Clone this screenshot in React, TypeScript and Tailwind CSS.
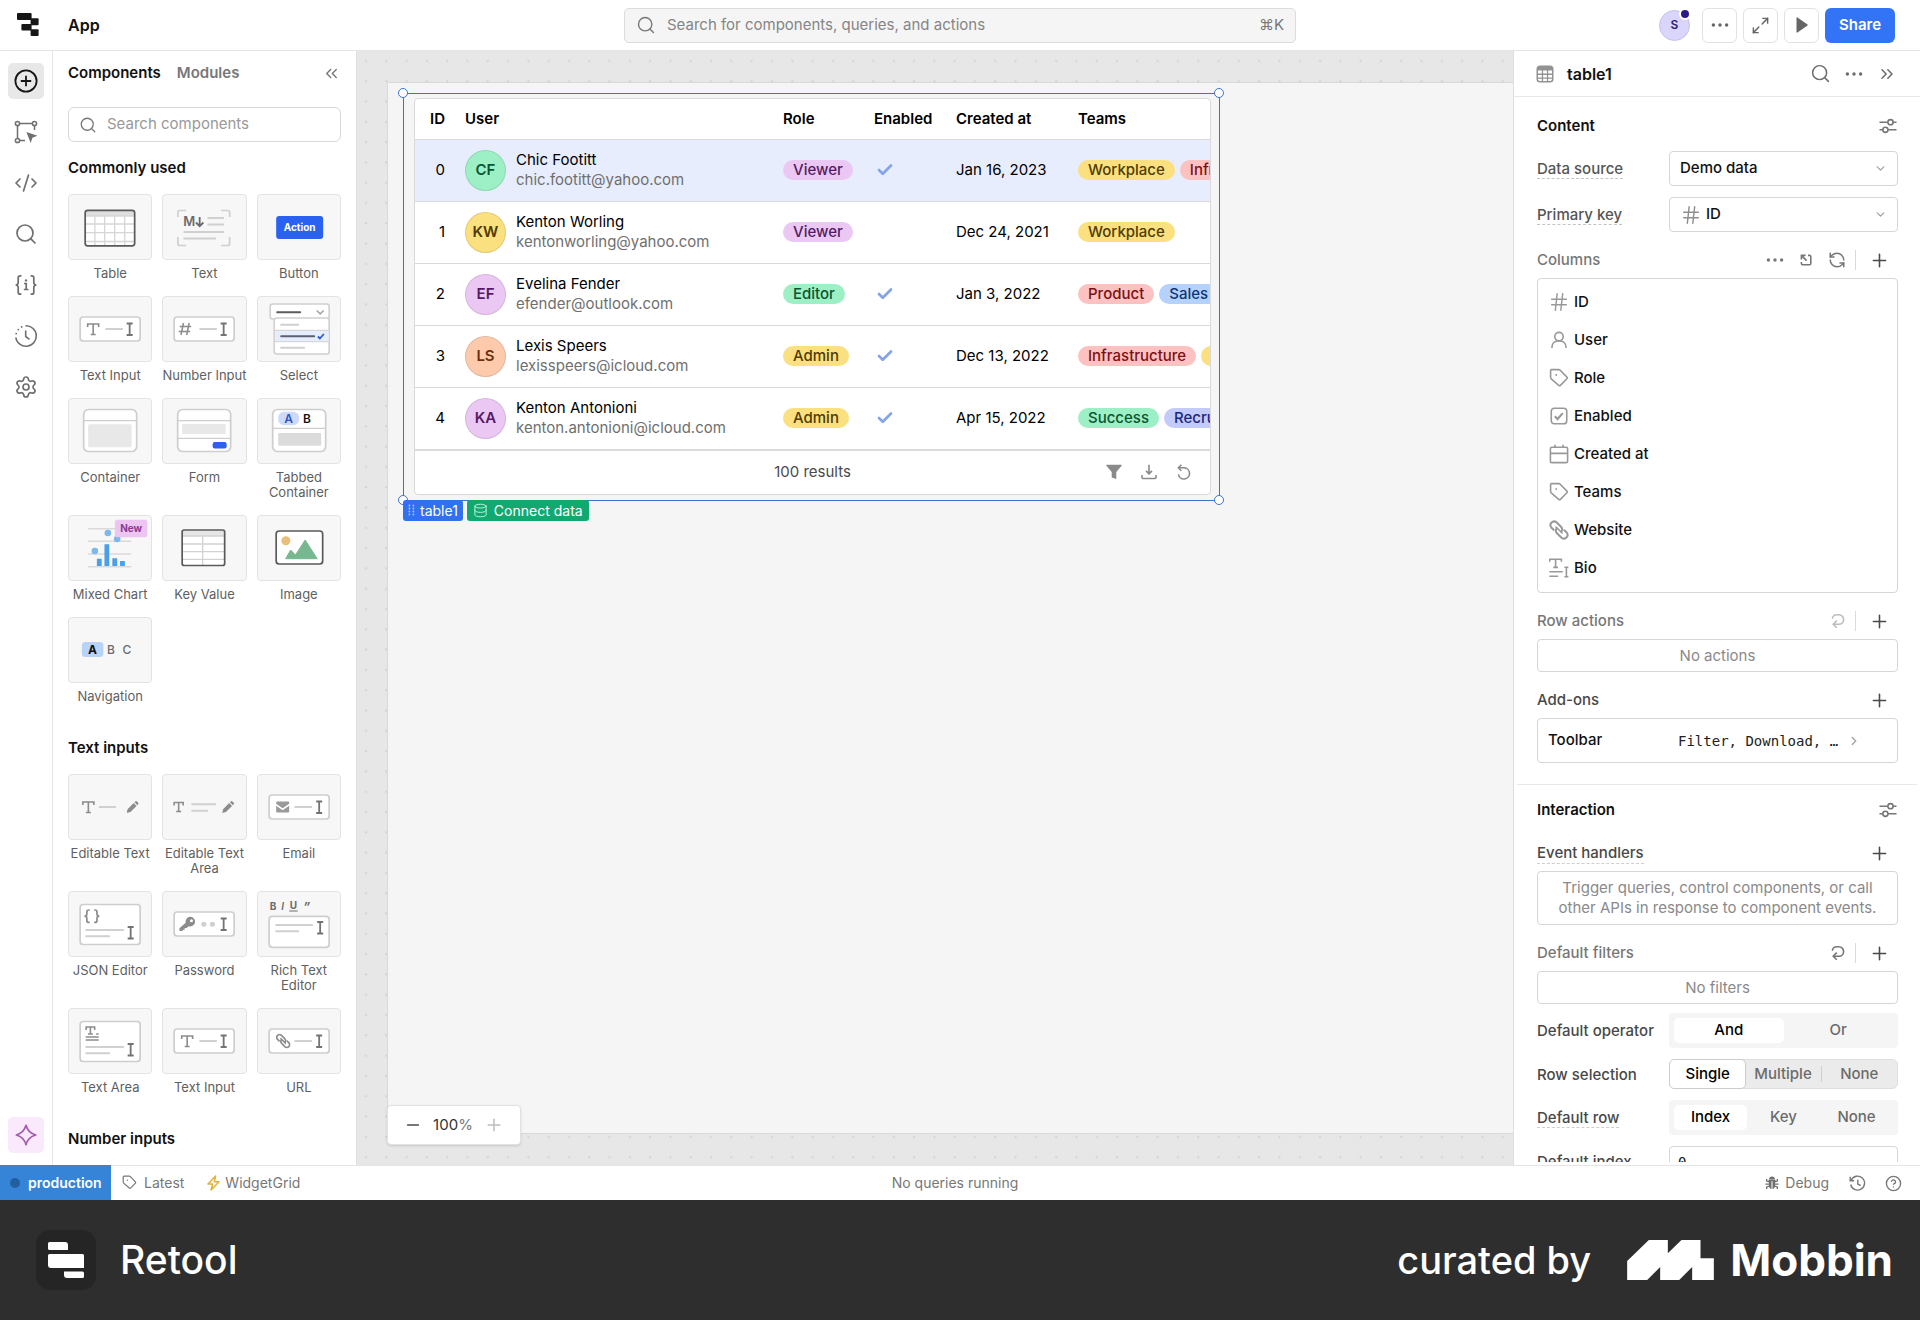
import React, { useState } from 'react';
import {
  Search,
  CodeXml,
  Settings,
  ChevronsLeft,
  ChevronsRight,
  ChevronDown,
  ChevronRight,
  Maximize2,
  RefreshCcw,
  Plus,
  Minus,
  Hash,
  Check,
  CircleQuestionMark,
  Database,
} from 'lucide-react';

type DrawingProps = { className?: string };

/* ---------- Icons ---------- */

const Dots: React.FC<DrawingProps> = ({ className = '' }) => (
  <svg viewBox="0 0 18 18" className={`w-[18px] h-[18px] ${className}`} fill="currentColor">
    <circle cx="2.4" cy="9" r="1.7" />
    <circle cx="9" cy="9" r="1.7" />
    <circle cx="15.6" cy="9" r="1.7" />
  </svg>
);

const Sliders: React.FC<DrawingProps> = ({ className = '' }) => (
  <svg viewBox="0 0 18 18" className={`w-[18px] h-[18px] ${className}`} fill="none" stroke="currentColor" strokeWidth="1.6">
    <path d="M.5 5.2h8.2M14.2 5.2h3.3M.5 12.8h3.2M9.2 12.8h8.3" />
    <circle cx="11.5" cy="5.2" r="2.6" />
    <circle cx="6.4" cy="12.8" r="2.6" />
  </svg>
);

const ReturnArrow: React.FC<DrawingProps> = ({ className = '' }) => (
  <svg viewBox="0 0 16 16" className={`w-4 h-4 ${className}`} fill="none" stroke="currentColor" strokeWidth="1.6">
    <path d="M2.4 5.8C2.6 3.2 4.6 1.8 7 1.8h1.9a4.7 4.7 0 0 1 0 9.4H3.6" />
    <path d="M6.8 7.6 3.2 11.2l3.6 3.6" />
  </svg>
);

const CollapseBox: React.FC<DrawingProps> = ({ className = '' }) => (
  <svg viewBox="0 0 12 12" className={`w-3 h-3 ${className}`} fill="none" stroke="currentColor" strokeWidth="1.6">
    <path d="M8 1.4h1.6a1.2 1.2 0 0 1 1.2 1.2v7a1.2 1.2 0 0 1-1.2 1.2h-7a1.2 1.2 0 0 1-1.2-1.2V8" />
    <path d="M1.4 5.6V1.4h4.2M1.6 1.6l5 5" />
  </svg>
);

const TagIcon: React.FC<DrawingProps> = ({ className = '' }) => (
  <svg viewBox="0 0 20 20" className={className} fill="none" stroke="currentColor" strokeWidth="1.6" strokeLinejoin="round">
    <path d="M1.6 2.6a1 1 0 0 1 1-1h7.2a2 2 0 0 1 1.4.6l6.7 6.9a1.2 1.2 0 0 1 0 1.7l-6.5 6.6a1.2 1.2 0 0 1-1.7 0L2.2 10.8a2 2 0 0 1-.6-1.4z" />
    <circle cx="7.2" cy="7" r=".9" fill="currentColor" stroke="none" />
  </svg>
);

const PersonIcon: React.FC<DrawingProps> = ({ className = '' }) => (
  <svg viewBox="0 0 20 20" className={className} fill="none" stroke="currentColor" strokeWidth="1.8">
    <circle cx="10" cy="6.2" r="4.7" />
    <path d="M2.2 18.8v-1c0-3.8 3-6.8 7.8-6.8s7.8 3 7.8 6.8v1" />
  </svg>
);

const CheckBoxIcon: React.FC<DrawingProps> = ({ className = '' }) => (
  <svg viewBox="0 0 20 20" className={className} fill="none" stroke="currentColor" strokeWidth="1.8">
    <rect x="1.4" y="1.4" width="17.2" height="17.2" rx="3.4" />
    <path d="m5.4 10.4 3 3 5.8-6.6" strokeWidth="2.4" />
  </svg>
);

const CalendarIcon: React.FC<DrawingProps> = ({ className = '' }) => (
  <svg viewBox="0 0 20 20" className={className} fill="none" stroke="currentColor" strokeWidth="1.6">
    <rect x="1.4" y="3.2" width="17.2" height="15.4" rx="1.4" />
    <path d="M1.4 9.4h17.2M6 .8v2.6M14 .8v2.6" />
  </svg>
);

const LinkIcon: React.FC<DrawingProps> = ({ className = '' }) => (
  <svg viewBox="0 0 20 20" className={className} fill="none" stroke="currentColor" strokeWidth="2" strokeLinecap="round">
    <path d="M4.6 9.8 2.3 7.5a3.7 3.7 0 0 1 5.2-5.2l4.5 4.5a3.7 3.7 0 0 1 .5 4.6" />
    <path d="M15.4 10.2l2.3 2.3a3.7 3.7 0 0 1-5.2 5.2L8 13.2a3.7 3.7 0 0 1-.5-4.6" />
    <path d="m7 7 6 6" strokeWidth="1.6" />
  </svg>
);

const LongTextIcon: React.FC<DrawingProps> = ({ className = '' }) => (
  <svg viewBox="0 0 20 20" className={className} fill="none" stroke="currentColor" strokeWidth="1.6">
    <path d="M.8 3.8V1.2h11.6v2.6M6.6 1.2v8.2M4.2 9.4H9M.4 13.8h13.4M.4 18.2h8.8" />
    <path d="M15.4 9.2h4M15.4 18.8h4M17.4 9.2v9.6" />
  </svg>
);

const TableIcon: React.FC<DrawingProps> = ({ className = '' }) => (
  <svg viewBox="0 0 18 18" className={`w-[18px] h-[18px] ${className}`}>
    <rect x=".5" y=".5" width="17" height="17" rx="3.5" fill="#929292" />
    <g fill="#fff">
      <path d="M2 5.4h3.8v3.2H2zM7.1 5.4h3.8v3.2H7.1zM12.2 5.4H16v3.2h-3.8zM2 9.9h3.8v2.5H2zM7.1 9.9h3.8v2.5H7.1zM12.2 9.9H16v2.5h-3.8zM7.1 13.7h3.8V16H7.1z" />
      <path d="M2 13.7h3.8V16H4a2 2 0 0 1-2-2zM12.2 13.7H16v.3a2 2 0 0 1-2 2h-1.8z" />
    </g>
  </svg>
);

const AddIcon = () => (
  <svg viewBox="0 0 24 24" className="w-6 h-6" fill="none" stroke="currentColor" strokeWidth="1.8">
    <circle cx="12" cy="12" r="10.6" />
    <path d="M12 6.8v10.4M6.8 12h10.4" />
  </svg>
);

const FrameSelectIcon = () => (
  <svg viewBox="0 0 24 24" className="w-6 h-6" fill="none" stroke="currentColor" strokeWidth="1.5">
    <circle cx="3.5" cy="3.5" r="2.1" />
    <circle cx="20.5" cy="3.5" r="2.1" />
    <circle cx="3.5" cy="20.5" r="2.1" />
    <path d="M5.6 3.5h12.8M3.5 5.6v12.8M20.5 5.6V10M5.6 20.5H11" />
    <path d="m12.4 12 11 3.7-5 2-1.7 5.2z" fill="currentColor" stroke="none" />
  </svg>
);

const StateIcon = () => (
  <svg viewBox="0 0 24 24" className="w-6 h-6" fill="none" stroke="currentColor" strokeWidth="1.7">
    <path d="M7.4 2.8H6.2a2 2 0 0 0-2 2v4.4c0 1.6-1 2.8-2.6 2.8 1.600 0 2.600 1.200 2.600 2.800v4.400a2 2 0 0 0 2 2h1.200" />
    <path d="M16.600 2.800h1.200a2 2 0 0 1 2 2v4.400c0 1.600 1 2.800 2.600 2.800-1.600 0-2.600 1.200-2.600 2.800v4.400a2 2 0 0 1-2 2h-1.200" />
    <path d="M10 10.5h2.200v6M9.800 16.500h4.600" />
    <circle cx="12" cy="7.4" r="1.2" fill="currentColor" stroke="none" />
  </svg>
);

const HistoryIcon = () => (
  <svg viewBox="0 0 24 24" className="w-6 h-6" fill="none" stroke="currentColor" strokeWidth="1.6">
    <path d="M11.5 1.7A10.3 10.3 0 1 1 1.8 13.5" />
    <path d="M11.7 6.5v6l3.8 2.8" />
    <g fill="currentColor" stroke="none">
      <circle cx="2.2" cy="9.6" r=".9" />
      <circle cx="4.3" cy="5.6" r=".9" />
      <circle cx="7.7" cy="2.9" r=".9" />
    </g>
  </svg>
);

const SparkIcon = () => (
  <svg viewBox="0 0 22 22" className="w-[22px] h-[22px]" fill="none" stroke="#a35cab" strokeWidth="1.7" strokeLinejoin="round">
    <path d="M11 1.300c1.400 5.400 4.200 8.200 9.700 9.700-5.500 1.500-8.300 4.300-9.700 9.700-1.400-5.400-4.200-8.200-9.700-9.700C6.800 9.500 9.600 6.700 11 1.300z" />
  </svg>
);

const BugIcon = () => (
  <svg viewBox="0 0 14 14" className="w-[14px] h-[14px]" fill="none" stroke="#6f6f6f" strokeWidth="1.3">
    <path d="M4 3.6C4 1.7 5.3.6 7 .6s3 1.1 3 3z" fill="#6f6f6f" stroke="none" />
    <path d="M4 5h2.5v8C5 12.8 4 11.5 4 10zM10 5H7.500v8c1.500-.2 2.500-1.500 2.500-3z" fill="#6f6f6f" stroke="none" />
    <path d="M4 5.8 1.6 4.9V3M4 8.2H.4M4 10.2l-2.400 1V13M10 5.800l2.400-.9V3M10 8.200h3.600M10 10.200l2.400 1V13M3.500 4.500h7" />
  </svg>
);

const RecentIcon = () => (
  <svg viewBox="0 0 17 17" className="w-[17px] h-[17px]" fill="none" stroke="#777" strokeWidth="1.4">
    <path d="M2.2 5.2A7 7 0 1 1 1.7 9.5" />
    <path d="M1.2 1.8v3.9h3.9M8.8 4.8v4.300l2.800 1.400" />
  </svg>
);

const BoltIcon = () => (
  <svg viewBox="0 0 13 16" className="w-[13px] h-4" fill="none" stroke="#e3b33c" strokeWidth="1.6" strokeLinejoin="round">
    <path d="M8.600 1 1 9h4.600l-1.400 6L12 6.800H7.300z" />
  </svg>
);

const RetoolMark = () => (
  <svg viewBox="0 0 22 24" className="w-[22px] h-6" fill="#161616">
    <rect x="0" y="0" width="14.6" height="7" rx="1" />
    <rect x="13.6" y="5.2" width="8" height="7" rx="1" />
    <rect x="4.4" y="11" width="10.2" height="6.6" rx="1" />
    <rect x="13.6" y="16.2" width="8" height="6.8" rx="1" />
  </svg>
);

const GripIcon = () => (
  <svg viewBox="0 0 7 12" className="w-[7px] h-3" fill="#a9c4fb">
    {[1.5, 4.5, 7.5, 10.5].map((y) => (
      <g key={y}>
        <circle cx="1.400" cy={y} r=".9" />
        <circle cx="5.400" cy={y} r=".9" />
      </g>
    ))}
  </svg>
);

const FunnelIcon = () => (
  <svg viewBox="0 0 16 16" className="w-4 h-4" fill="#8a8a8a">
    <path d="M.8.8h14.400c.5 0 .7.500.4.900L10.300 8v7l-4.600-1.500V8L.4 1.700C.1 1.300.300.8.800.8z" />
  </svg>
);

const DownloadIcon = () => (
  <svg viewBox="0 0 16 16" className="w-4 h-4" fill="none" stroke="#8a8a8a" strokeWidth="1.600">
    <path d="M1 11v2.500a1 1 0 0 0 1 1h12a1 1 0 0 0 1-1V11" />
    <path d="M8 .8v9M5 6.900l3 3 3-3" />
  </svg>
);

const ResetIcon = () => (
  <svg viewBox="0 0 16 16" className="w-4 h-4" fill="none" stroke="#8a8a8a" strokeWidth="1.600">
    <path d="M2.800 3.800h5.400a5.600 5.600 0 1 1-5.800 6.600" />
    <path d="M5.400.8 2.400 3.800l3 3" />
  </svg>
);

/* ---------- Parts used in the component thumbnails ---------- */

const SerifT: React.FC<{ x: number; y: number; w?: number; h?: number }> = ({ x, y, w = 11, h = 11 }) => (
  <path
    d={`M${x} ${y + 3}v-3h${w}v3M${x + w / 2} ${y}v${h}M${x + w / 2 - 2.5} ${y + h}h5`}
    fill="none"
    stroke="#8c8c8c"
    strokeWidth="1.6"
  />
);

const Cursor: React.FC<{ x: number; y: number }> = ({ x, y }) => (
  <path d={`M${x} ${y}h6M${x + 3} ${y}v11.5M${x} ${y + 11.5}h6`} fill="none" stroke="#737373" strokeWidth="1.8" />
);

const Line: React.FC<{ x1: number; x2: number; y: number; color?: string }> = ({ x1, x2, y, color = '#d0d0d0' }) => (
  <path d={`M${x1} ${y}H${x2}`} stroke={color} strokeWidth="2" strokeLinecap="round" />
);

const Field: React.FC<{ x?: number; y?: number; h?: number }> = ({ x = 12, y = 21, h = 24 }) => (
  <rect x={x} y={y} width="60" height={h} rx="3" fill="#fff" stroke="#cecece" strokeWidth="1.7" />
);

const Pencil: React.FC<{ x: number }> = ({ x }) => (
  <svg x={x} y="27" width="12" height="12" viewBox="0 0 12 12" fill="#8c8c8c">
    <path d="M0 12l.9-3.8L7 2.1 9.9 5 3.800 11.100zM7.800 1.300 9 .2c.3-.3.7-.3 1 0L11.800 2c.3.3.3.7 0 1l-1.100 1.200z" />
  </svg>
);

const LinesAndCursor = () => (
  <>
    <Line x1={18} x2={55} y={39} />
    <Line x1={18} x2={41} y={45.3} />
    <Cursor x={59.5} y={36} />
  </>
);

const Thumb: React.FC<{ children: React.ReactNode }> = ({ children }) => (
  <svg viewBox="1 1 82 64" className="w-full h-full" fontFamily="Inter, sans-serif" fill="none">
    {children}
  </svg>
);

const thumbs: Record<string, React.ReactNode> = {
  table: (
    <Thumb>
      <rect x="17" y="16.3" width="49.5" height="35.5" rx="2.5" fill="#fff" />
      <path d="M17 17h49v5H17z" fill="#dedede" />
      <path d="M17 22h49M17 30h49M17 38.7h49M17 47.5h49M26.7 22v29M36.5 22v29M46.5 22v29M56.5 22v29" stroke="#d6d6d6" strokeWidth="1.3" />
      <rect x="17" y="16.3" width="49.5" height="35.5" rx="2.5" stroke="#5a5a5a" strokeWidth="1.7" />
    </Thumb>
  ),
  text: (
    <Thumb>
      <path
        d="M15.7 23v-4.5a2 2 0 0 1 2-2H24M59 16.5h6.5a2 2 0 0 1 2 2V23M15.7 43v6.5a2 2 0 0 0 2 2H24M59 51.5h6.5a2 2 0 0 0 2-2V43"
        stroke="#cfcfcf"
        strokeWidth="1.7"
      />
      <text x="21" y="32" fontSize="13" fontWeight="600" fill="#6b6b6b">
        M
      </text>
      <path d="M37.5 23v9M33.8 28.5l3.7 3.7 3.7-3.7" stroke="#6b6b6b" strokeWidth="1.8" />
      <Line x1={46} x2={61} y={24} />
      <Line x1={46} x2={61} y={30.5} />
      <Line x1={22} x2={61} y={38} />
      <Line x1={22} x2={53} y={44.5} />
    </Thumb>
  ),
  button: (
    <Thumb>
      <rect x="19" y="22" width="47" height="23" rx="3" fill="#2a61f0" />
      <text x="42.5" y="37" fontSize="10" fontWeight="700" fill="#fff" textAnchor="middle">
        Action
      </text>
    </Thumb>
  ),
  textInput: (
    <Thumb>
      <Field />
      <SerifT x={19.5} y={28} h={10.5} />
      <Line x1={38} x2={54} y={33} />
      <Cursor x={58.5} y={27.5} />
    </Thumb>
  ),
  numberInput: (
    <Thumb>
      <Field />
      <path d="M21.3 27l-2.5 12M27 27l-2.5 12M17.5 30.5H29M16.5 35.5H28" stroke="#8c8c8c" strokeWidth="1.5" />
      <Line x1={38} x2={54} y={33} />
      <Cursor x={58.5} y={27.5} />
    </Thumb>
  ),
  select: (
    <Thumb>
      <rect x="13" y="8" width="59" height="15" rx="2.5" fill="#fff" stroke="#d0d0d0" strokeWidth="1.6" />
      <Line x1={20} x2={43} y={16.3} color="#5c5c5c" />
      <path d="m59.5 14.5 3.5 3.3 3.5-3.3" stroke="#a5a5a5" strokeWidth="1.6" />
      <rect x="17" y="22" width="55" height="36" rx="2.5" fill="#fff" stroke="#d0d0d0" strokeWidth="1.6" />
      <path d="M17.7 34.5h53.6v11H17.7z" fill="#e6edfc" />
      <path d="M17 34.3h55M17 45.7h55" stroke="#d0d0d0" />
      <Line x1={24} x2={41} y={28.7} />
      <Line x1={24} x2={57} y={40.3} color="#5c6270" />
      <path d="m60.7 40.5 2 2 4-4.5" stroke="#2b5cc7" strokeWidth="1.8" />
      <Line x1={24} x2={47} y={51.7} />
    </Thumb>
  ),
  container: (
    <Thumb>
      <rect x="15.5" y="11.5" width="53" height="42" rx="5" fill="#fff" stroke="#cecece" strokeWidth="1.7" />
      <path d="M15.5 22.7h53" stroke="#cecece" strokeWidth="1.3" />
      <rect x="20" y="26.3" width="43.5" height="23" rx="1.5" fill="#e8e8e8" />
    </Thumb>
  ),
  form: (
    <Thumb>
      <rect x="15.5" y="11.5" width="53" height="42" rx="5" fill="#fff" stroke="#cecece" strokeWidth="1.7" />
      <path d="M15.5 22.7h53M15.5 40.3h53" stroke="#cecece" strokeWidth="1.3" />
      <rect x="20" y="26" width="43.5" height="10" rx="1" fill="#e8e8e8" />
      <rect x="50.5" y="44" width="14" height="6.5" rx="2" fill="#2f5ff0" />
    </Thumb>
  ),
  tabs: (
    <Thumb>
      <rect x="15.5" y="11.5" width="53" height="42" rx="5" fill="#fff" stroke="#cecece" strokeWidth="1.7" />
      <rect x="21" y="13.7" width="21" height="13.6" rx="6" fill="#cddafb" />
      <text x="31.5" y="25" fontSize="12" fontWeight="600" fill="#2f57c4" textAnchor="middle">
        A
      </text>
      <text x="49.7" y="25" fontSize="12" fontWeight="600" fill="#111" textAnchor="middle">
        B
      </text>
      <path d="M15.5 30.3h53" stroke="#cecece" strokeWidth="1.3" />
      <rect x="21" y="35" width="43" height="12.7" rx="1" fill="#dbdbdb" />
    </Thumb>
  ),
  mixedChart: (
    <Thumb>
      <path d="M20 13.7h43M20 26.3h43M20 39h43M20 51.7h43" stroke="#dadada" strokeWidth="1.6" />
      <g fill="#7cb9ea">
        <circle cx="39.7" cy="18" r="3.3" />
        <circle cx="49" cy="24" r="3.3" />
        <circle cx="26.7" cy="36" r="3.3" />
      </g>
      <path d="M28.7 43.7h4.8V51h-4.8zM36.3 29.3h4.8V51h-4.8zM44.2 43.3H49V51h-4.8zM51.9 46h4.8v5h-4.8z" fill="#4a9fe8" />
      <rect x="46.7" y="4.7" width="32.5" height="17.6" rx="2.5" fill="#ecc6f0" />
      <text x="63" y="17.2" fontSize="10" fontWeight="700" fill="#8b3a94" textAnchor="middle">
        New
      </text>
    </Thumb>
  ),
  keyValue: (
    <Thumb>
      <rect x="20" y="15" width="42.5" height="35.5" rx="2" fill="#fff" />
      <path d="M20.5 15.5H62V21H20.5z" fill="#e6e6e6" />
      <path d="M20 21h42.5M20 29h42.5M20 36.7h42.5M20 44.3h42.5M40.5 21v29" stroke="#d2d2d2" strokeWidth="1.3" />
      <rect x="20" y="15" width="42.5" height="35.5" rx="2" stroke="#5a5a5a" strokeWidth="1.7" />
    </Thumb>
  ),
  image: (
    <Thumb>
      <rect x="19" y="16" width="46.5" height="33" rx="3" fill="#fff" stroke="#5a5a5a" strokeWidth="1.7" />
      <circle cx="28.7" cy="25.7" r="4.5" fill="#e9be7a" />
      <path d="M28.5 43.7 33.5 35l4.800 5L48 25l12 18.700z" fill="#78b891" stroke="#78b891" strokeLinejoin="round" />
    </Thumb>
  ),
  navigation: (
    <Thumb>
      <rect x="13.7" y="25" width="21.5" height="15" rx="3.5" fill="#b8d2f8" />
      <g fontSize="12" textAnchor="middle">
        <text x="24.3" y="36.8" fontWeight="700" fill="#111">
          A
        </text>
        <text x="42.7" y="36.8" fontWeight="500" fill="#6b6b6b">
          B
        </text>
        <text x="58.7" y="36.8" fontWeight="500" fill="#6b6b6b">
          C
        </text>
      </g>
    </Thumb>
  ),
  editableText: (
    <Thumb>
      <SerifT x={14.7} y={28} h={10.5} />
      <Line x1={31.5} x2={47} y={33} />
      <Pencil x={58.5} />
    </Thumb>
  ),
  editableTextArea: (
    <Thumb>
      <SerifT x={12} y={28.5} w={9} h={9} />
      <Line x1={30} x2={53} y={30.3} />
      <Line x1={30} x2={45} y={36.7} />
      <Pencil x={60} />
    </Thumb>
  ),
  email: (
    <Thumb>
      <Field />
      <path d="M19 28.5a1 1 0 0 1 1-1h11a1 1 0 0 1 1 1v1.300l-6.500 4.400-6.500-4.400zM19 31.800l6.500 4.400 6.500-4.400v5.700a1 1 0 0 1-1 1H20a1 1 0 0 1-1-1z" fill="#9a9a9a" />
      <Line x1={38} x2={54} y={33} />
      <Cursor x={59} y={27.5} />
    </Thumb>
  ),
  jsonEditor: (
    <Thumb>
      <Field y={13.5} h={40} />
      <path
        d="M21.500 19h-.8a2 2 0 0 0-2 2v2c0 1.400-.8 2.200-2.400 2.200 1.600 0 2.400.8 2.400 2.200v2a2 2 0 0 0 2 2h.8M26 19h.8a2 2 0 0 1 2 2v2c0 1.400.8 2.200 2.400 2.200-1.600 0-2.400.8-2.400 2.200v2a2 2 0 0 1-2 2H26"
        stroke="#8c8c8c"
        strokeWidth="1.700"
      />
      <LinesAndCursor />
    </Thumb>
  ),
  password: (
    <Thumb>
      <Field />
      <path d="M28 25.700a4.900 4.900 0 0 1 0 9.800c-.6 0-1.200-.1-1.700-.3L24.500 37h-2v1.700h-2V40h-3.200v-2.700l6.200-5.600a4.900 4.900 0 0 1 4.500-6zm1.300 2.500a1.500 1.500 0 1 0 0 3 1.500 1.500 0 0 0 0-3z" fill="#8c8c8c" fillRule="evenodd" />
      <circle cx="41.7" cy="33.3" r="2.5" fill="#d0d0d0" />
      <circle cx="50.3" cy="33.3" r="2.5" fill="#d0d0d0" />
      <Cursor x={58.5} y={27.5} />
    </Thumb>
  ),
  richText: (
    <Thumb>
      <g fontSize="10" fontWeight="700" fill="#6b6b6b">
        <text x="12.5" y="19">
          B
        </text>
        <text x="24" y="19" fontStyle="italic" fontWeight="600">
          I
        </text>
        <text x="32.5" y="18">
          U
        </text>
        <text x="46" y="20" fontStyle="italic" fontSize="12">
          ”
        </text>
      </g>
      <path d="M32 20h8.5" stroke="#6b6b6b" />
      <Field y={25.3} h={31} />
      <Line x1={19} x2={55} y={34} />
      <Line x1={19} x2={41} y={40.3} />
      <Cursor x={60} y={31} />
    </Thumb>
  ),
  textArea: (
    <Thumb>
      <Field y={13.5} h={40} />
      <SerifT x={18} y={19} w={8.5} h={7} />
      <path d="M17.5 29h13M17.5 32h13M28 26h2.5" stroke="#8c8c8c" strokeWidth="1.4" />
      <LinesAndCursor />
    </Thumb>
  ),
  url: (
    <Thumb>
      <Field />
      <svg x="18.500" y="25.500" width="15" height="15" viewBox="0 0 20 20" stroke="#8c8c8c" strokeWidth="2.200" strokeLinecap="round">
        <path d="M4.600 9.800 2.300 7.500a3.700 3.700 0 0 1 5.200-5.200l4.500 4.500a3.700 3.700 0 0 1 .5 4.600" />
        <path d="M15.400 10.200l2.300 2.300a3.700 3.700 0 0 1-5.200 5.200L8 13.200a3.700 3.700 0 0 1-.5-4.600" />
        <path d="m7 7 6 6" />
      </svg>
      <Line x1={38} x2={54} y={33} />
      <Cursor x={59} y={27.5} />
    </Thumb>
  ),
};

/* ---------- Data ---------- */

const sections = [
  {
    title: 'Commonly used',
    items: [
      ['Table', 'table'],
      ['Text', 'text'],
      ['Button', 'button'],
      ['Text Input', 'textInput'],
      ['Number Input', 'numberInput'],
      ['Select', 'select'],
      ['Container', 'container'],
      ['Form', 'form'],
      ['Tabbed Container', 'tabs'],
      ['Mixed Chart', 'mixedChart'],
      ['Key Value', 'keyValue'],
      ['Image', 'image'],
      ['Navigation', 'navigation'],
    ],
  },
  {
    title: 'Text inputs',
    items: [
      ['Editable Text', 'editableText'],
      ['Editable Text Area', 'editableTextArea'],
      ['Email', 'email'],
      ['JSON Editor', 'jsonEditor'],
      ['Password', 'password'],
      ['Rich Text Editor', 'richText'],
      ['Text Area', 'textArea'],
      ['Text Input', 'textInput'],
      ['URL', 'url'],
    ],
  },
];

const tones = {
  purple: 'bg-[#ebc8f3] text-[#551a63]',
  green: 'bg-[#9df0c6] text-[#0b5530]',
  yellow: 'bg-[#fbe07f] text-[#4f3a04]',
  red: 'bg-[#fcc2c2] text-[#7d1014]',
  blue: 'bg-[#b5d2fc] text-[#0f3576]',
  indigo: 'bg-[#c3cbfb] text-[#1b2683]',
  orange: 'bg-[#fdcbac] text-[#6f2f0d]',
};

type Tone = keyof typeof tones;

interface User {
  name: string;
  email: string;
  initials: string;
  tone: Tone;
  role: [string, Tone];
  enabled: boolean;
  created: string;
  teams: [string, Tone][];
}

const users: User[] = [
  {
    name: 'Chic Footitt',
    email: 'chic.footitt@yahoo.com',
    initials: 'CF',
    tone: 'green',
    role: ['Viewer', 'purple'],
    enabled: true,
    created: 'Jan 16, 2023',
    teams: [['Workplace', 'yellow'], ['Infrastructure', 'red']],
  },
  {
    name: 'Kenton Worling',
    email: 'kentonworling@yahoo.com',
    initials: 'KW',
    tone: 'yellow',
    role: ['Viewer', 'purple'],
    enabled: false,
    created: 'Dec 24, 2021',
    teams: [['Workplace', 'yellow']],
  },
  {
    name: 'Evelina Fender',
    email: 'efender@outlook.com',
    initials: 'EF',
    tone: 'purple',
    role: ['Editor', 'green'],
    enabled: true,
    created: 'Jan 3, 2022',
    teams: [['Product', 'red'], ['Sales', 'blue']],
  },
  {
    name: 'Lexis Speers',
    email: 'lexisspeers@icloud.com',
    initials: 'LS',
    tone: 'orange',
    role: ['Admin', 'yellow'],
    enabled: true,
    created: 'Dec 13, 2022',
    teams: [['Infrastructure', 'red'], ['Workplace', 'yellow']],
  },
  {
    name: 'Kenton Antonioni',
    email: 'kenton.antonioni@icloud.com',
    initials: 'KA',
    tone: 'purple',
    role: ['Admin', 'yellow'],
    enabled: true,
    created: 'Apr 15, 2022',
    teams: [['Success', 'green'], ['Recruiting', 'indigo']],
  },
];

const columns = [
  { label: 'ID', icon: <Hash size={22} strokeWidth={1.6} className="shrink-0" /> },
  { label: 'User', icon: <PersonIcon className="w-[18px] h-[18px]" /> },
  { label: 'Role', icon: <TagIcon className="w-5 h-5" /> },
  { label: 'Enabled', icon: <CheckBoxIcon className="w-[18px] h-[18px]" /> },
  { label: 'Created at', icon: <CalendarIcon className="w-5 h-5" /> },
  { label: 'Teams', icon: <TagIcon className="w-5 h-5" /> },
  { label: 'Website', icon: <LinkIcon className="w-5 h-5" /> },
  { label: 'Bio', icon: <LongTextIcon className="w-5 h-5" /> },
];

/* ---------- Layout pieces ---------- */

const TopBar = () => (
  <header className="grid grid-cols-[1fr_35%_1fr] items-center h-[51px] shrink-0 border-b border-[#e4e4e4] bg-white">
    <div className="flex items-center gap-[29px] pl-[17px]">
      <RetoolMark />
      <h1 className="text-base font-semibold">App</h1>
    </div>
    <div className="flex items-center h-[35px] rounded-[5px] border border-[#dcdcdc] bg-[#f5f5f5] px-[11px] gap-[11px]">
      <Search size={20} strokeWidth={1.7} className="shrink-0 text-[#777]" />
      <input
        type="text"
        aria-label="Search for components, queries, and actions"
        placeholder="Search for components, queries, and actions"
        className="flex-1 min-w-0 bg-transparent text-[15px] outline-none placeholder:text-[#858585]"
      />
      <span className="text-[15px] text-[#777]">⌘K</span>
    </div>
    <div className="flex items-center justify-end gap-[6px] pr-[25px]">
      <div className="relative mr-[6px] flex items-center justify-center w-[31px] h-[31px] rounded-full border border-[#c6c0ee] bg-[#dad5fb] text-xs font-semibold text-[#2c1b85]">
        S
        <span className="absolute -top-[3px] -right-[2px] w-3 h-3 rounded-full border-2 border-white bg-[#2c1b85]" />
      </div>
      <button aria-label="More" className="flex items-center justify-center w-[35px] h-[35px] rounded-[6px] border border-[#e2e2e2] text-[#666]">
        <Dots />
      </button>
      <button aria-label="Expand" className="flex items-center justify-center w-[35px] h-[35px] rounded-[6px] border border-[#e2e2e2] text-[#666]">
        <Maximize2 size={19} strokeWidth={1.8} />
      </button>
      <button aria-label="Preview" className="flex items-center justify-center w-[35px] h-[35px] rounded-[6px] border border-[#e2e2e2] text-[#666]">
        <svg viewBox="0 0 12 16" className="w-3 h-4" fill="currentColor">
          <path d="M.5 1v14c0 .6.6.9 1 .6l10-7c.4-.3.4-.9 0-1.2l-10-7C1.100.1.500.4.500 1z" />
        </svg>
      </button>
      <button className="w-[70px] h-[35px] rounded-[6px] bg-[#3374f6] text-[15px] font-semibold text-white">Share</button>
    </div>
  </header>
);

const NavRail = () => {
  const items = [
    { label: 'Add component', icon: <AddIcon /> },
    { label: 'Component tree', icon: <FrameSelectIcon /> },
    { label: 'Code', icon: <CodeXml size={24} strokeWidth={1.7} /> },
    { label: 'Search', icon: <Search size={24} strokeWidth={1.7} /> },
    { label: 'State', icon: <StateIcon /> },
    { label: 'History', icon: <HistoryIcon /> },
    { label: 'Settings', icon: <Settings size={24} strokeWidth={1.7} /> },
  ];

  return (
    <nav className="flex flex-col justify-between w-[53px] shrink-0 border-r border-[#e4e4e4] bg-white px-2 py-3">
      <div className="flex flex-col gap-[15px]">
        {items.map((item, i) => (
          <button
            key={item.label}
            aria-label={item.label}
            className={`flex items-center justify-center w-9 h-9 rounded-[5px] ${i === 0 ? 'bg-[#e8e8e8] text-[#161616]' : 'text-[#6f6f6f]'}`}
          >
            {item.icon}
          </button>
        ))}
      </div>
      <button aria-label="Assistant" className="flex items-center justify-center w-9 h-9 rounded-[5px] bg-[#fae8fc]">
        <SparkIcon />
      </button>
    </nav>
  );
};

const ComponentPanel = () => (
  <aside className="flex flex-col w-[304px] shrink-0 overflow-hidden border-r border-[#dedede] bg-white px-[15px]">
    <div className="flex items-center mt-3 h-5 shrink-0">
      <button className="text-[15px] font-semibold">Components</button>
      <button className="ml-4 text-[15px] font-semibold text-[#777]">Modules</button>
      <button aria-label="Collapse panel" className="ml-auto text-[#777]">
        <ChevronsLeft size={19} strokeWidth={1.8} />
      </button>
    </div>
    <label className="flex items-center gap-[10px] mt-6 h-[35px] shrink-0 rounded-[6px] border border-[#d8d8d8] px-[10px]">
      <Search size={18} strokeWidth={1.7} className="shrink-0 text-[#777]" />
      <input
        type="text"
        aria-label="Search components"
        placeholder="Search components"
        className="flex-1 min-w-0 text-[15px] outline-none placeholder:text-[#999]"
      />
    </label>
    <div className="mt-4 flex flex-col gap-[34px]">
      {sections.map((section) => (
        <section key={section.title}>
          <h2 className="mb-4 text-[15px] leading-5 font-semibold">{section.title}</h2>
          <div className="grid grid-cols-3 gap-x-[10px] gap-y-[15px]">
            {section.items.map(([label, thumb]) => (
              <button key={label} className="flex flex-col items-center">
                <span className="block w-full h-[66px] rounded-[4px] border border-[#e3e3e3] bg-[#f7f7f7]">{thumbs[thumb]}</span>
                <span className="mt-[6px] text-[13px] leading-[15px] text-[#5f5f5f]">{label}</span>
              </button>
            ))}
          </div>
        </section>
      ))}
      <h2 className="text-[15px] leading-5 font-semibold">Number inputs</h2>
    </div>
  </aside>
);

const Badge: React.FC<{ label: string; tone: Tone }> = ({ label, tone }) => (
  <span className={`inline-block h-5 rounded-full px-[10px] text-[15px] leading-5 font-medium ${tones[tone]}`}>{label}</span>
);

const UsersTable = () => (
  <div className="overflow-hidden rounded-[4px] border border-[#dadada] bg-white">
    <table className="w-full table-fixed border-collapse text-[15px] text-black">
      <colgroup>
        <col className="w-[40px]" />
        <col />
        <col className="w-[91px]" />
        <col className="w-[82px]" />
        <col className="w-[122px]" />
        <col className="w-[142px]" />
      </colgroup>
      <thead>
        <tr className="h-10 border-b border-[#dadada] text-left">
          <th className="pr-[10px] text-right font-semibold">ID</th>
          <th className="px-[10px] font-semibold">User</th>
          <th className="px-[10px] font-semibold">Role</th>
          <th className="px-[10px] font-semibold">Enabled</th>
          <th className="px-[10px] font-semibold">Created at</th>
          <th className="px-[10px] font-semibold">Teams</th>
        </tr>
      </thead>
      <tbody>
        {users.map((user, i) => (
          <tr key={user.email} className={`h-[62px] border-b border-[#dadada] ${i === 0 ? 'bg-[#e7edfd]' : ''}`}>
            <td className="pr-[10px] text-right">{i}</td>
            <td className="px-[10px]">
              <div className="flex items-center gap-[10px]">
                <span className={`flex items-center justify-center w-[41px] h-[41px] rounded-full border border-black/10 font-semibold ${tones[user.tone]}`}>
                  {user.initials}
                </span>
                <span className="leading-5">
                  <span className="block">{user.name}</span>
                  <span className="block text-[#6f6f6f]">{user.email}</span>
                </span>
              </div>
            </td>
            <td className="px-[10px]">
              <Badge label={user.role[0]} tone={user.role[1]} />
            </td>
            <td className="px-3">{user.enabled && <Check size={18} strokeWidth={3.6} className="text-[#84a3ea]" />}</td>
            <td className="px-[10px] whitespace-nowrap">{user.created}</td>
            <td className="pl-[10px] overflow-hidden">
              <div className="flex gap-[5px]">
                {user.teams.map(([team, tone]) => (
                  <Badge key={team} label={team} tone={tone} />
                ))}
              </div>
            </td>
          </tr>
        ))}
      </tbody>
    </table>
    <div className="grid grid-cols-3 items-center h-11 border-t border-[#dadada] px-[18px] text-[15px] text-[#4a4a4a]">
      <span />
      <span className="text-center">100 results</span>
      <div className="flex justify-end gap-[19px]">
        <button aria-label="Filter"><FunnelIcon /></button>
        <button aria-label="Download"><DownloadIcon /></button>
        <button aria-label="Refresh"><ResetIcon /></button>
      </div>
    </div>
  </div>
);

const Canvas = () => (
  <main className="relative flex flex-1 min-w-0 overflow-hidden bg-[#e7e7e7] pt-[31px] pb-[31px] pl-[30px]">
    {/* Dotted backdrop */}
    <svg className="absolute inset-0 w-full h-full" aria-hidden="true">
      <pattern id="canvas-dots" x="-1" y="0" width="20.3" height="20.3" patternUnits="userSpaceOnUse">
        <circle cx="10" cy="10" r="1.1" fill="#cfcfcf" />
      </pattern>
      <rect width="100%" height="100%" fill="url(#canvas-dots)" />
    </svg>
    <div className="relative flex-1 min-w-0 border-y border-l border-[#d9d9d9] bg-[#f5f5f5]">
      <div className="absolute top-[10px] left-[15px] w-[817px] border border-[#3f72cf] pl-[10px] pr-2 pt-1 pb-[5px]">
        <UsersTable />
        <span className="absolute -top-[6px] -left-[6px] w-[10px] h-[10px] rounded-full border border-[#3f72cf] bg-white" />
        <span className="absolute -top-[6px] -right-[5px] w-[10px] h-[10px] rounded-full border border-[#3f72cf] bg-white" />
        <span className="absolute -bottom-[5px] -left-[6px] w-[10px] h-[10px] rounded-full border border-[#3f72cf] bg-white" />
        <span className="absolute -bottom-[5px] -right-[5px] w-[10px] h-[10px] rounded-full border border-[#3f72cf] bg-white" />
        <div className="absolute top-full -left-px flex gap-1 text-sm leading-[21px] text-white">
          <span className="flex items-center gap-[5px] rounded-[3px] bg-[#3170ee] px-[5px]">
            <GripIcon />
            table1
          </span>
          <button className="flex items-center gap-[6px] rounded-[3px] bg-[#12a970] px-[6px]">
            <Database size={15} strokeWidth={1.6} className="text-[#c4f0dc]" />
            Connect data
          </button>
        </div>
      </div>
    </div>
    <div className="absolute bottom-5 left-[30px] flex items-center justify-between w-[134px] h-10 rounded-[4px] border border-[#e2e2e2] bg-white px-4 shadow-sm">
      <button aria-label="Zoom out" className="text-[#777]">
        <Minus size={18} strokeWidth={2.4} />
      </button>
      <span className="text-[15px] text-[#333]">
        100<span className="text-[#777]">%</span>
      </span>
      <button aria-label="Zoom in" className="text-[#bdbdbd]">
        <Plus size={20} strokeWidth={1.8} />
      </button>
    </div>
  </main>
);

interface GroupHeadingProps {
  title: string;
  muted?: boolean;
  dotted?: boolean;
  className?: string;
  children?: React.ReactNode;
}

const GroupHeading: React.FC<GroupHeadingProps> = ({ title, muted, dotted, className = '', children }) => (
  <div className={`flex items-center h-5 ${className}`}>
    <h3 className={`text-[15px] leading-5 font-medium ${muted ? 'text-[#777]' : 'text-[#484848]'} ${dotted ? 'border-b border-dashed border-[#cfcfcf]' : ''}`}>
      {title}
    </h3>
    <div className="ml-auto flex items-center">
      {children}
      <button aria-label={`Add to ${title}`} className="mr-2 text-[#4a4a4a]">
        <Plus size={21} strokeWidth={1.8} />
      </button>
    </div>
  </div>
);

const Divider = () => <span className="ml-[9px] mr-[13px] w-px h-5 bg-[#dadada]" />;

const SelectRow: React.FC<{ id: string; label: string; value: string; icon?: React.ReactNode }> = ({ id, label, value, icon }) => (
  <div className="flex items-center">
    <div className="w-[132px] shrink-0">
      <label htmlFor={id} className="border-b border-dashed border-[#c4c4c4] text-[15px] font-medium text-[#555]">
        {label}
      </label>
    </div>
    <div className="flex flex-1 items-center h-[35px] rounded-[4px] border border-[#d6d6d6] px-[10px]">
      {icon}
      <select id={id} className="flex-1 min-w-0 appearance-none bg-transparent text-[15px] font-medium outline-none">
        <option>{value}</option>
      </select>
      <ChevronDown size={13} strokeWidth={2.4} className="text-[#a0a0a0]" />
    </div>
  </div>
);

const SegmentRow: React.FC<{ label: string; options: string[]; dotted?: boolean; outlined?: boolean }> = ({
  label,
  options,
  dotted,
  outlined,
}) => {
  const [active, setActive] = useState(options[0]);

  return (
    <div className="flex items-center">
      <div className="w-[132px] shrink-0">
        <span className={`whitespace-nowrap text-[15px] font-medium text-[#484848] ${dotted ? 'border-b border-dashed border-[#cfcfcf]' : ''}`}>
          {label}
        </span>
      </div>
      <div
        role="group"
        aria-label={label}
        className={`flex flex-1 ${outlined ? 'h-[30px] rounded-[6px] border border-[#dedede] bg-[#ebebeb]' : 'h-[35px] rounded-[4px] bg-[#f5f5f5] p-[5px]'}`}
      >
        {options.map((option, i) => (
          <React.Fragment key={option}>
            {outlined && i === 2 && <span className="my-[6px] w-px bg-[#cfcfcf]" />}
            <button
              aria-pressed={active === option}
              onClick={() => setActive(option)}
              className={`flex-1 rounded-[5px] text-[15px] font-medium ${
                active === option
                  ? outlined
                    ? '-m-px border border-[#cdcdcd] bg-white text-black'
                    : 'bg-white text-black'
                  : 'text-[#6b6b6b]'
              }`}
            >
              {option}
            </button>
          </React.Fragment>
        ))}
      </div>
    </div>
  );
};

const Inspector = () => (
  <aside className="flex flex-col w-[407px] shrink-0 border-l border-[#dedede] bg-white pb-[3px]">
    <div className="flex items-center h-[46px] shrink-0 border-b border-[#e8e8e8] pl-[22px] pr-[23px]">
      <TableIcon />
      <h2 className="ml-[13px] text-base font-semibold">table1</h2>
      <div className="ml-auto flex items-center gap-[14px] text-[#6b6b6b]">
        <button aria-label="Search properties"><Search size={21} strokeWidth={1.7} /></button>
        <button aria-label="More options"><Dots /></button>
        <button aria-label="Collapse inspector"><ChevronsRight size={20} strokeWidth={1.8} /></button>
      </div>
    </div>

    <div className="flex-1 min-h-0 overflow-hidden">
      <section className="pl-[23px] pr-[22px] pb-[21px] pt-[19px]">
        <div className="flex items-center justify-between h-5">
          <h2 className="text-[15px] font-semibold">Content</h2>
          <button aria-label="Content options" className="mr-[1px] text-[#777]"><Sliders /></button>
        </div>
        <div className="mt-[15px] flex flex-col gap-[11px]">
          <SelectRow id="data-source" label="Data source" value="Demo data" />
          <SelectRow
            id="primary-key"
            label="Primary key"
            value="ID"
            icon={<Hash size={22} strokeWidth={1.6} className="mr-1 shrink-0 text-[#8f8f8f]" />}
          />
        </div>

        <GroupHeading title="Columns" muted className="mt-[18px]">
          <div className="flex items-center gap-4 text-[#777]">
            <button aria-label="Column options"><Dots /></button>
            <button aria-label="Collapse columns"><CollapseBox /></button>
            <button aria-label="Regenerate columns"><RefreshCcw size={18} strokeWidth={2} /></button>
          </div>
          <Divider />
        </GroupHeading>
        <ul className="mt-2 rounded-[4px] border border-[#d6d6d6] pt-1 pb-[5px]">
          {columns.map((column) => (
            <li key={column.label} className="flex items-center h-[38px] pl-[11px]">
              <span className="flex w-5 justify-center text-[#999]">{column.icon}</span>
              <span className="ml-[5px] text-[15px] font-medium">{column.label}</span>
            </li>
          ))}
        </ul>

        <GroupHeading title="Row actions" muted className="mt-[18px]">
          <button aria-label="Reset row actions" className="text-[#bdbdbd]"><ReturnArrow /></button>
          <Divider />
        </GroupHeading>
        <p className="mt-2 rounded-[4px] border border-[#d6d6d6] text-center text-[15px] leading-[31px] text-[#8a8a8a]">No actions</p>

        <GroupHeading title="Add-ons" className="mt-[18px]" />
        <button className="mt-2 flex items-center w-full h-[45px] rounded-[4px] border border-[#d6d6d6] px-[10px]">
          <span className="w-[130px] text-left text-[15px] font-medium">Toolbar</span>
          <span className="font-['DejaVu_Sans_Mono',monospace] text-sm text-[#222]">Filter, Download, …</span>
          <ChevronRight size={14} strokeWidth={2.4} className="ml-[9px] text-[#a5a5a5]" />
        </button>
      </section>

      <div className="mx-[3px] border-t border-[#e8e8e8]" />

      <section className="pl-[23px] pr-[22px] pt-[15px]">
        <div className="flex items-center justify-between h-5">
          <h2 className="text-[15px] font-semibold">Interaction</h2>
          <button aria-label="Interaction options" className="mr-[1px] text-[#777]"><Sliders /></button>
        </div>

        <GroupHeading title="Event handlers" dotted className="mt-[23px]" />
        <p className="mt-2 rounded-[4px] border border-[#d6d6d6] px-3 py-[6px] text-center text-[15px] leading-5 text-[#8a8a8a]">
          Trigger queries, control components, or call other APIs in response to component events.
        </p>

        <GroupHeading title="Default filters" muted className="mt-[18px]">
          <button aria-label="Reset default filters" className="text-[#777]"><ReturnArrow /></button>
          <Divider />
        </GroupHeading>
        <p className="mt-2 rounded-[4px] border border-[#d6d6d6] text-center text-[15px] leading-[31px] text-[#8a8a8a]">No filters</p>

        <div className="mt-[9px] flex flex-col gap-[11px]">
          <SegmentRow label="Default operator" options={['And', 'Or']} />
          <SegmentRow label="Row selection" options={['Single', 'Multiple', 'None']} outlined />
          <SegmentRow label="Default row" options={['Index', 'Key', 'None']} dotted />
          <div className="flex items-center">
            <label htmlFor="default-index" className="w-[132px] shrink-0 text-[15px] leading-5 font-medium text-[#484848]">
              Default index
            </label>
            <input
              id="default-index"
              type="text"
              defaultValue="0"
              className="flex-1 min-w-0 h-[31px] rounded-[4px] border border-[#d6d6d6] px-2 font-['DejaVu_Sans_Mono',monospace] text-sm outline-none"
            />
          </div>
        </div>
      </section>
    </div>
  </aside>
);

const StatusBar = () => (
  <div className="grid grid-cols-3 items-center h-[35px] shrink-0 border-t border-[#e4e4e4] bg-white pr-[10px] text-sm text-[#777]">
    <div className="flex items-center h-[35px] -mt-px">
      <button className="flex items-center gap-2 w-[111px] h-full bg-[#3584d8] pl-[10px] font-semibold text-white">
        <span className="w-[10px] h-[10px] rounded-full bg-[#235f9f]" />
        production
      </button>
      <button className="ml-[11px] flex items-center gap-[7px]">
        <TagIcon className="w-[15px] h-[15px]" />
        Latest
      </button>
      <button className="ml-[23px] flex items-center gap-[5px]">
        <BoltIcon />
        WidgetGrid
      </button>
    </div>
    <span className="text-center">No queries running</span>
    <div className="flex items-center justify-end pr-2">
      <button className="flex items-center gap-[6px]">
        <BugIcon />
        Debug
      </button>
      <button aria-label="Release history" className="ml-5"><RecentIcon /></button>
      <button aria-label="Help" className="ml-[19px]"><CircleQuestionMark size={17} strokeWidth={1.9} /></button>
    </div>
  </div>
);

const Footer = () => (
  <footer className="flex items-center h-[120px] shrink-0 bg-[#2e2e2e] pl-9 pr-[27px] text-white">
    <div className="flex items-center justify-center w-[60px] h-[60px] rounded-[14px] bg-[#252525]">
      <svg viewBox="0 0 36 36" className="w-9 h-9" fill="#fff">
        <path d="M1.5 0H17a3 3 0 0 1 3 3v5H1.5A1.5 1.5 0 0 1 0 6.5v-5A1.5 1.5 0 0 1 1.5 0z" />
        <path d="M1.5 12h33a1.5 1.5 0 0 1 1.5 1.5V26H3a3 3 0 0 1-3-3v-9.5A1.5 1.5 0 0 1 1.5 12z" />
        <path d="M16 29.500h18.500A1.500 1.500 0 0 1 36 31v3.500a1.500 1.500 0 0 1-1.500 1.500H19a3 3 0 0 1-3-3z" />
      </svg>
    </div>
    <span className="ml-6 text-[39px] font-medium">Retool</span>
    <span className="ml-auto text-[38px] font-medium">curated by</span>
    <svg viewBox="0 0 260 120" className="ml-9 w-[87px] h-10" fill="#fff">
      <path d="M0 63 65 0h57v40L163 0h57v55h40v65h-65V81l-39 39H99V81l-39 39H0z" />
    </svg>
    <span className="ml-4 text-[44px] font-bold">Mobbin</span>
  </footer>
);

const App = () => (
  <div className="flex flex-col h-screen overflow-hidden bg-white font-['Inter',sans-serif] text-[#111]">
    <TopBar />
    <div className="flex flex-1 min-h-0">
      <NavRail />
      <ComponentPanel />
      <Canvas />
      <Inspector />
    </div>
    <StatusBar />
    <Footer />
  </div>
);

export default App;
